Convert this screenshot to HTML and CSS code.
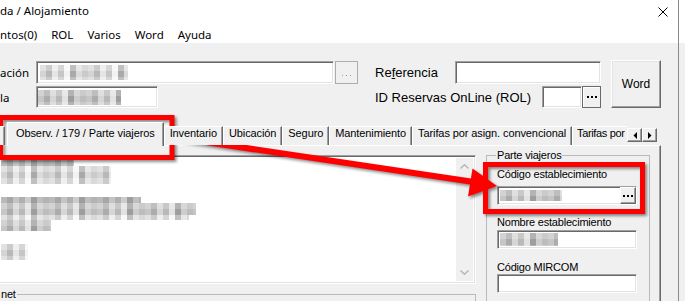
FILE: index.html
```html
<!DOCTYPE html>
<html lang="es">
<head>
<meta charset="utf-8">
<title>Alojamiento</title>
<link rel="stylesheet" href="styles.css">
</head>
<body>
<div class="window">
  <div class="titlebar">
    <span class="title">da / Alojamiento</span>
    <svg class="close" width="10" height="10" viewBox="0 0 10 10"><path d="M0.5 0.5L9.5 9.5M9.5 0.5L0.5 9.5" stroke="#000" stroke-width="1"/></svg>
  </div>
  <div class="menubar">
    <span>ntos(0)</span><span>ROL</span><span>Varios</span><span>Word</span><span>Ayuda</span>
  </div>

  <div class="form">
    <div class="col-left">
      <div class="row r1">
        <span class="lbl-seg">ación</span>
        <div class="edit e-long"><div class="blur light bz-top1"></div></div>
        <div class="btn btn-dots"><svg width="9" height="1" viewBox="0 0 9 1"><rect x="0" width="1" height="1" fill="#9a9a9a"/><rect x="4" width="1" height="1" fill="#9a9a9a"/><rect x="8" width="1" height="1" fill="#9a9a9a"/></svg></div>
      </div>
      <div class="row r2">
        <span class="lbl-seg">la</span>
        <div class="edit e-short"><div class="blur bz-top2"></div></div>
      </div>
    </div>
    <div class="col-mid">
      <div class="row r1">
        <span class="lbl lbl-ref">Re<u>f</u>erencia</span>
        <div class="edit e-ref"></div>
      </div>
      <div class="row r2">
        <span class="lbl lbl-rol">ID Reservas OnLine (ROL)</span>
        <div class="edit e-rol"></div>
        <div class="btn btn-rol"><svg width="10" height="2" viewBox="0 0 10 2"><rect x="0" width="2" height="2"/><rect x="4" width="2" height="2"/><rect x="8" width="2" height="2"/></svg></div>
      </div>
    </div>
    <div class="btn btn-word">Word</div>
  </div>

  <div class="tabstrip">
    <div class="tablist">
      <div class="tab tab-frag"></div>
      <div class="tab active">Observ. / 179 / Parte viajeros</div>
      <div class="tab">Inventario</div>
      <div class="tab">Ubicación</div>
      <div class="tab">Seguro</div>
      <div class="tab">Mantenimiento</div>
      <div class="tab">Tarifas por asign. convencional</div>
      <div class="tab tab-last">Tarifas por</div>
    </div>
    <div class="tab-arrows">
      <div class="arrow-btn"><svg width="4" height="7" viewBox="0 0 4 7"><path d="M4 0V7L0.5 3.5Z"/></svg></div>
      <div class="arrow-btn"><svg width="4" height="7" viewBox="0 0 4 7"><path d="M0 0V7L3.5 3.5Z"/></svg></div>
    </div>
  </div>

  <div class="panel">
    <div class="panel-left">
      <div class="memo">
        <div class="memo-text">
          <div class="blur dark bm-a"></div>
          <div class="blur light bm-b"></div>
          <div class="blur dark bm-c1"></div>
          <div class="blur bm-c2"></div>
          <div class="blur light bm-c3"></div>
          <div class="blur bm-c4"></div>
          <div class="blur light bm-d"></div>
        </div>
        <div class="scrollbar">
          <svg width="9" height="5" viewBox="0 0 9 5"><path d="M0.5 4.5L4.5 0.8L8.5 4.5" fill="none" stroke="#b4b4b4" stroke-width="1.4"/></svg>
          <svg width="9" height="5" viewBox="0 0 9 5"><path d="M0.5 0.5L4.5 4.2L8.5 0.5" fill="none" stroke="#b4b4b4" stroke-width="1.4"/></svg>
        </div>
      </div>
      <fieldset class="group group-net"><legend>net</legend></fieldset>
    </div>

    <fieldset class="group group-parte">
      <legend>Parte viajeros</legend>
      <div class="fld-label fl-1">Código establecimiento</div>
      <div class="edit fld-edit">
        <div class="blur bz-cod"></div>
        <div class="btn btn-in"><svg width="10" height="2" viewBox="0 0 10 2"><rect x="0" width="2" height="2"/><rect x="4" width="2" height="2"/><rect x="8" width="2" height="2"/></svg></div>
      </div>
      <div class="fld-label fl-2">Nombre establecimiento</div>
      <div class="edit fld-edit"><div class="blur bz-nom"></div></div>
      <div class="fld-label fl-3">Código MIRCOM</div>
      <div class="edit fld-edit"></div>
    </fieldset>
  </div>
</div>

<svg class="annot" width="685" height="301" viewBox="0 0 685 301">
  <g fill="none" stroke="#ff0000" stroke-width="5">
    <rect x="0.5" y="117.5" width="171.5" height="40"/>
    <rect x="485.5" y="164.5" width="157" height="47"/>
    <line x1="172" y1="137" x2="474" y2="182" stroke-width="6"/>
  </g>
  <polygon points="497,186 468,196.5 472.5,168.5" fill="#ff0000"/>
</svg>
</body>
</html>
```

FILE: styles.css
```css
* { box-sizing: border-box; }
html, body { margin: 0; padding: 0; }

body {
  width: 685px;
  height: 301px;
  overflow: hidden;
  position: relative;
  background: linear-gradient(#ffffff 0 43px, #f0f0f0 43px);
  font-family: "Liberation Sans", Arial, sans-serif;
  font-size: 13px;
  color: #000;
}

.window {
  width: 679px;
  height: 301px;
  border-right: 1px solid #8a8a8a;
  display: flex;
  flex-direction: column;
  background: #f0f0f0;
}

/* title + menu */
.titlebar {
  height: 26px;
  flex: none;
  background: #fff;
  display: flex;
  justify-content: space-between;
  align-items: flex-start;
  font-family: "Noto Sans", "Open Sans", sans-serif;
  font-size: 11.5px;
  line-height: 22px;
}
.close { margin: 7px 10px 0 0; }

.menubar {
  height: 17px;
  flex: none;
  background: #fff;
  display: flex;
  gap: 14px;
  font-family: "Noto Sans", "Open Sans", sans-serif;
  font-size: 11.5px;
  line-height: 17px;
}

/* top form */
.form {
  height: 78px;
  flex: none;
  display: flex;
  align-items: flex-start;
  padding-top: 17px;
}
.col-left { width: 359px; }
.col-mid { margin-left: 16px; width: 226px; }
.row { display: flex; align-items: center; }
.r1 { height: 23px; margin-top: 1px; }
.r2 { height: 22px; margin-top: 2px; }

.lbl-seg {
  width: 36px;
  flex: none;
  font-family: "Noto Sans", "Open Sans", sans-serif;
  font-size: 11.5px;
}
.lbl { flex: none; font-size: 13px; white-space: nowrap; }
.lbl-ref { width: 80px; }
.lbl-rol { width: 167px; }

.edit {
  height: 100%;
  flex: none;
  background: #fff;
  border: 1px solid;
  border-color: #a0a0a0 #ffffff #ffffff #a0a0a0;
  box-shadow: inset 1px 1px 0 #696969, inset -1px -1px 0 #e3e3e3;
  display: flex;
  align-items: center;
}
.e-long { width: 298px; }
.e-short { width: 122px; }
.e-ref { width: 146px; }
.e-rol { width: 40px; }

.btn {
  flex: none;
  background: #f0f0f0;
  border: 1px solid;
  border-color: #ffffff #696969 #696969 #ffffff;
  box-shadow: inset -1px -1px 0 #a0a0a0;
  display: flex;
  align-items: center;
  justify-content: center;
}
.btn-dots {
  width: 23px;
  height: 23px;
  margin-left: 1px;
  border-color: #adadad;
  box-shadow: none;
  padding-top: 6px;
}
.btn-rol {
  width: 19px;
  height: 22px;
  border-color: #696969;
  box-shadow: inset 1px 1px 0 #fff;
}
.btn-word {
  width: 50px;
  height: 48px;
  margin-left: 10px;
  font-size: 12px;
  border-color: #ffffff #696969 #696969 #ffffff;
  box-shadow: inset -1px -1px 0 #a0a0a0, inset 1px 1px 0 #e3e3e3;
}

/* blurred (redacted) text */
.blur {
  flex: none;
  background:
    repeating-linear-gradient(180deg, rgba(255,255,255,0.22) 0 6px, rgba(255,255,255,0) 6px 12px),
    repeating-linear-gradient(90deg, #c6c6c6 0 6px, #acacac 6px 12px, #d6d6d6 12px 18px, #b9b9b9 18px 24px, #e2e2e2 24px 30px, #9e9e9e 30px 36px, #cdcdcd 36px 42px, #bdbdbd 42px 48px);
}
.blur.light { filter: brightness(1.07); }
.blur.dark { filter: brightness(0.88); }
.bz-top1 { width: 88px; height: 15px; margin-left: 3px; }
.bz-top2 { width: 83px; height: 15px; margin-left: 1px; }
.bz-cod { width: 62px; height: 11px; margin-left: 2px; }
.bz-nom { width: 58px; height: 13px; margin-left: 2px; }

/* tabs */
.tabstrip {
  height: 24px;
  flex: none;
  display: flex;
  align-items: flex-end;
  position: relative;
  z-index: 1;
}
.tablist {
  width: 627px;
  height: 25px;
  margin-bottom: -1px;
  display: flex;
  align-items: flex-end;
  overflow: hidden;
}
.tab {
  flex: none;
  height: 19px;
  margin-bottom: 1px;
  padding: 0 5px;
  border-top: 1px solid #fff;
  border-left: 1px solid #fff;
  border-right: 1px solid #696969;
  box-shadow: inset -1px 0 0 #a0a0a0;
  font-size: 11px;
  letter-spacing: -0.1px;
  line-height: 13px;
  white-space: nowrap;
  background: #f0f0f0;
}
.tab-frag { width: 5px; padding: 0; border-left: 0; }
.tab.active {
  height: 24px;
  margin: 0 0 0 2px;
  padding: 4px 8px 0;
}
.tab-last { padding-left: 4px; padding-right: 12px; letter-spacing: -0.35px; }
.tab-arrows {
  display: flex;
  align-self: flex-start;
  margin-top: 7px;
}
.arrow-btn {
  width: 15px;
  height: 14px;
  display: flex;
  align-items: center;
  justify-content: center;
  background: #f0f0f0;
  border: 1px solid;
  border-color: #ffffff #696969 #696969 #ffffff;
  box-shadow: inset -1px -1px 0 #a0a0a0;
}

/* panel */
.panel {
  width: 661px;
  flex: 1;
  display: flex;
  align-items: flex-start;
  padding-top: 9px;
  border-top: 1px solid #fff;
  border-right: 1px solid #696969;
  box-shadow: inset -1px 0 0 #a0a0a0;
  overflow: hidden;
}
.panel-left { width: 476px; flex: none; }

.memo {
  width: 478px;
  height: 129px;
  margin-left: -2px;
  display: flex;
  background: #fff;
  border: 1px solid;
  border-color: #a0a0a0 #ffffff #ffffff #a0a0a0;
  box-shadow: inset 1px 1px 0 #696969, inset -1px -1px 0 #e3e3e3;
  padding: 2px;
}
.memo-text { flex: 1; padding-top: 2px; }
.scrollbar {
  width: 17px;
  flex: none;
  background: #f0f0f0;
  display: flex;
  flex-direction: column;
  align-items: center;
  justify-content: space-between;
  padding: 6px 0 6px;
}
.bm-a { width: 73px; height: 6px; }
.bm-b { width: 110px; height: 18px; }
.bm-c1 { width: 140px; height: 6px; margin-top: 13px; }
.bm-c2 { width: 195px; height: 12px; }
.bm-c3 { width: 188px; height: 5px; }
.bm-c4 { width: 50px; height: 11px; }
.bm-d { width: 27px; height: 16px; margin-top: 13px; }

.group {
  margin: 0;
  padding: 0;
  min-width: 0;
  border: 1px solid #b9b9b9;
}
.group legend {
  font-size: 11px;
  line-height: 13px;
  letter-spacing: -0.2px;
  padding: 0 1px;
}
.group-net {
  margin: 4px 0 0 -2px;
  height: 30px;
}
.group-net legend { margin-left: 1px; }

.group-parte {
  width: 164px;
  height: 170px;
  flex: none;
  margin: -6px 0 0 10px;
  padding: 6px 0 0 10px;
}
.group-parte legend { margin-left: -1px; }

.fld-label {
  font-size: 11px;
  line-height: 13px;
  letter-spacing: -0.2px;
  white-space: nowrap;
}
.fl-1 { margin-bottom: 5px; }
.fl-2 { margin-top: 11px; margin-bottom: 1px; }
.fl-3 { margin-top: 12px; }
.fld-edit {
  width: 140px;
  height: 19px;
  justify-content: space-between;
}
.btn-in {
  width: 16px;
  height: 17px;
  border-color: #ffffff #696969 #696969 #ffffff;
}

/* annotation overlay */
.annot {
  position: absolute;
  left: 0;
  top: 0;
  pointer-events: none;
  filter: drop-shadow(2px 2px 1.5px rgba(0, 0, 0, 0.45));
}
```
